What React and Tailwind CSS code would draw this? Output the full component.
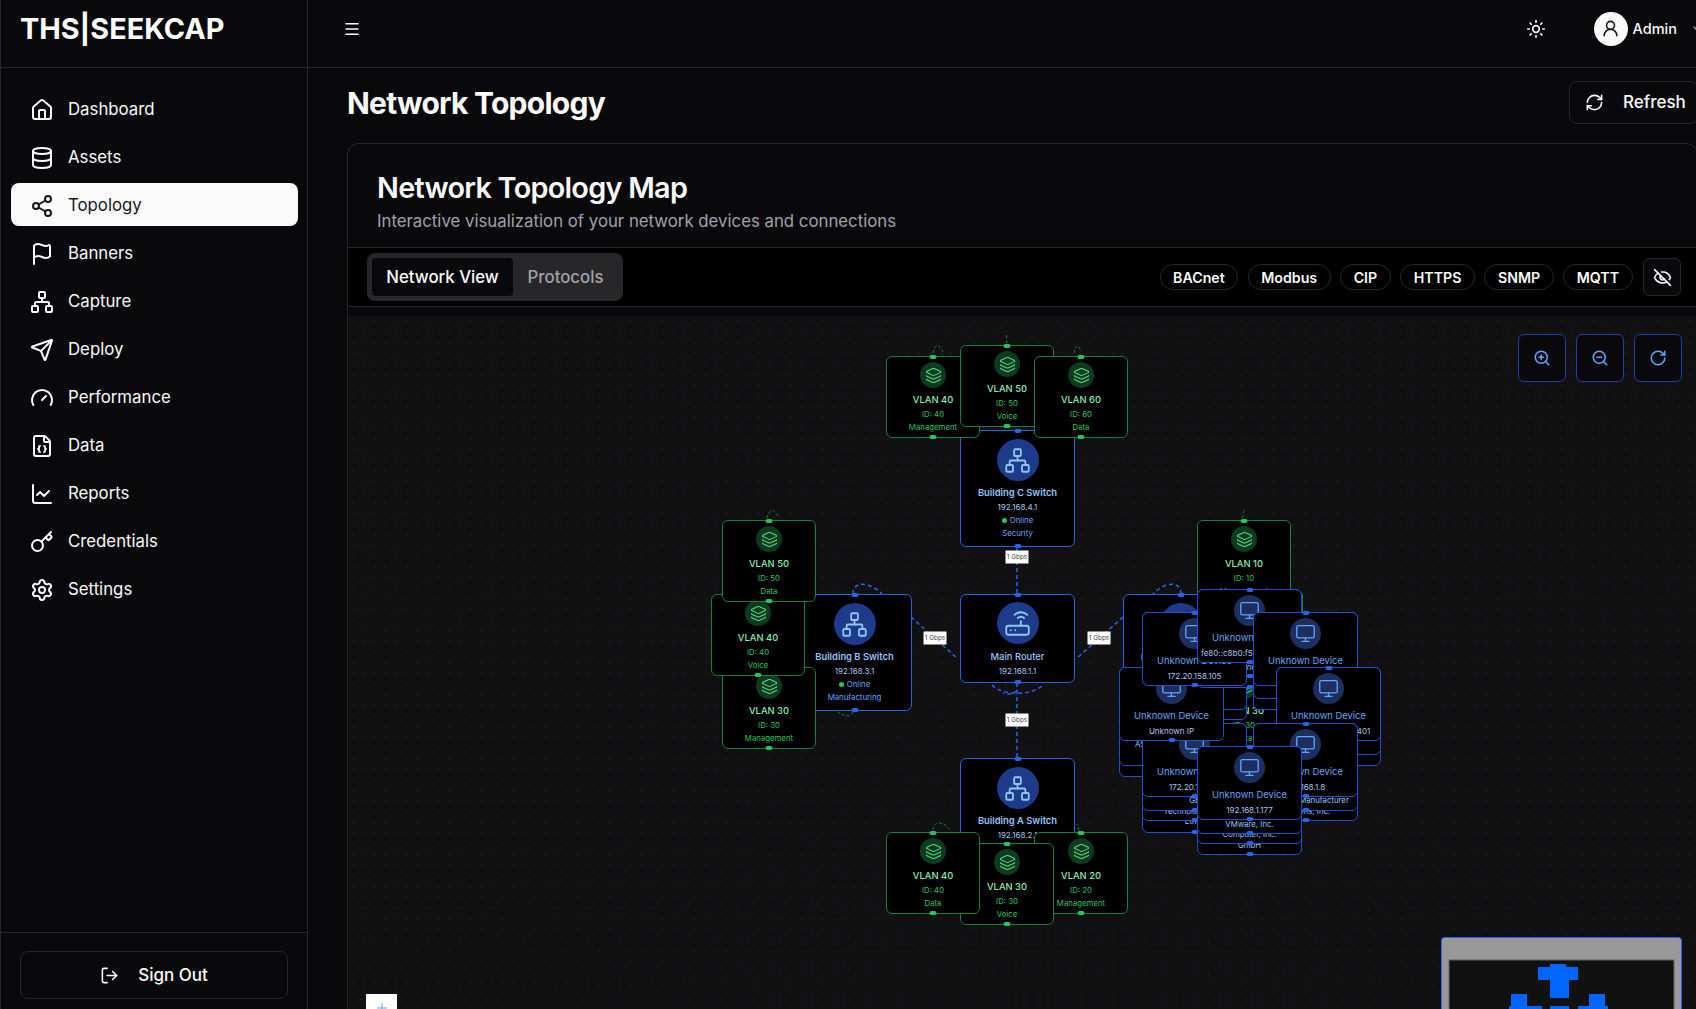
import React from 'react';
import {
  House, Database, Share2, Flag, Network, Send, Gauge, FileJson, ChartLine, Key, Settings, LogOut,
  Menu, Sun, UserRound, ChevronDown, RefreshCw, EyeOff, ZoomIn, ZoomOut, RotateCw, Layers, Router, Monitor, Plus,
} from 'lucide-react';

const OX = 348;
const OY = 316;

const navItems = [
  { label: 'Dashboard', icon: House },
  { label: 'Assets', icon: Database },
  { label: 'Topology', icon: Share2, active: true },
  { label: 'Banners', icon: Flag },
  { label: 'Capture', icon: Network },
  { label: 'Deploy', icon: Send },
  { label: 'Performance', icon: Gauge },
  { label: 'Data', icon: FileJson },
  { label: 'Reports', icon: ChartLine },
  { label: 'Credentials', icon: Key },
  { label: 'Settings', icon: Settings },
];

const protocols = ['BACnet', 'Modbus', 'CIP', 'HTTPS', 'SNMP', 'MQTT'];

// nodes are listed bottom to top, coordinates are page pixels
const nodes = [
  { kind: 'switch', x: 960, y: 430, title: 'Building C Switch', ip: '192.168.4.1', sub: 'Security' },
  { kind: 'vlan', x: 886, y: 356, title: 'VLAN 40', id: 40, sub: 'Management' },
  { kind: 'vlan', x: 960, y: 345, title: 'VLAN 50', id: 50, sub: 'Voice' },
  { kind: 'vlan', x: 1034, y: 356, title: 'VLAN 60', id: 60, sub: 'Data' },

  { kind: 'switch', x: 797, y: 594, title: 'Building B Switch', ip: '192.168.3.1', sub: 'Manufacturing' },
  { kind: 'vlan', x: 722, y: 667, title: 'VLAN 30', id: 30, sub: 'Management' },
  { kind: 'vlan', x: 711, y: 594, title: 'VLAN 40', id: 40, sub: 'Voice' },
  { kind: 'vlan', x: 722, y: 520, title: 'VLAN 50', id: 50, sub: 'Data' },

  { kind: 'router', x: 960, y: 594, title: 'Main Router', ip: '192.168.1.1' },

  { kind: 'switch', x: 960, y: 758, title: 'Building A Switch', ip: '192.168.2.1', sub: 'Office' },
  { kind: 'vlan', x: 1034, y: 832, title: 'VLAN 20', id: 20, sub: 'Management' },
  { kind: 'vlan', x: 960, y: 843, title: 'VLAN 30', id: 30, sub: 'Voice' },
  { kind: 'vlan', x: 886, y: 832, title: 'VLAN 40', id: 40, sub: 'Data' },

  { kind: 'switch', x: 1123, y: 594, title: 'Building D Switch', ip: '192.168.5.1', sub: 'Storage' },
  { kind: 'vlan', x: 1209, y: 590, title: 'VLAN 70', id: 70, sub: 'Guest' },
  { kind: 'vlan', x: 1197, y: 520, title: 'VLAN 10', id: 10, sub: 'Management' },
  { kind: 'vlan', x: 1197, y: 667, title: 'VLAN 30', id: 30, sub: 'Data' },

  { kind: 'stack', x: 1119, y: 667, stubs: [{ b: 765, t: 'ASUSTek Computer', ty: 744 }, { b: 776 }] },
  {
    kind: 'device', x: 1142, y: 723, ip: '172.20.158.62',
    stubs: [
      { b: 810, t: 'GE', ty: 800 },
      { b: 820, t: 'Technologies Co', ty: 811 },
      { b: 832, t: 'Ether', ty: 821 },
    ],
  },
  { kind: 'stack', x: 1142, y: 612, stubs: [{ b: 709 }, { b: 719 }] },
  { kind: 'device', x: 1119, y: 667, ip: 'Unknown IP' },
  { kind: 'stack', x: 1197, y: 589, stubs: [{ b: 676, t: 'Unknown', ty: 667 }, { b: 687 }] },
  { kind: 'device', x: 1142, y: 612, ip: '172.20.158.105' },
  { kind: 'device', x: 1197, y: 589, ip: 'fe80::c8b0:f57d:a3e1:9d2' },
  {
    kind: 'device', x: 1253, y: 612, ip: '192.168.1.20',
    stubs: [{ b: 698, t: 'Cisco Systems', ty: 689 }, { b: 709 }],
  },
  { kind: 'device', x: 1276, y: 667, ip: 'fe80::9c1d:47a:c1:f401', stubs: [{ b: 754 }, { b: 765 }] },
  {
    kind: 'device', x: 1253, y: 723, ip: '192.168.1.8',
    stubs: [
      { b: 810, t: 'Unknown Manufacturer', ty: 800 },
      { b: 820, t: 'Siemens, Inc.', ty: 811 },
    ],
  },
  {
    kind: 'device', x: 1197, y: 746, ip: '192.168.1.177',
    stubs: [
      { b: 833, t: 'VMware, Inc.', ty: 824 },
      { b: 843, t: 'Computer, Inc.', ty: 834 },
      { b: 854, t: 'GmbH', ty: 845 },
    ],
  },
];

const speedLabels = [
  { x: 1017, y: 557 },
  { x: 935, y: 638 },
  { x: 1099, y: 638 },
  { x: 1017, y: 720 },
];

const blueEdges = [
  'M1017 547 L1017 594',
  'M1017 683 L1017 758',
  'M911 617 L958 659',
  'M1123 617 L1076 659',
  'M853 594 C853 580 870 582 882 594',
  'M1181 594 C1181 580 1164 582 1153 594',
  'M992 685 C1002 696 1032 696 1043 685',
  'M1017 690 C1015 694 1008 695 1003 693',
];

const greenEdges = [
  'M933 353 C935 345 938 342 943 352',
  'M1007 343 L1006 333',
  'M1074 353 C1075 346 1078 342 1081 352',
  'M767 518 C769 510 772 507 778 516',
  'M1242 518 C1244 512 1245 508 1244 508',
  'M853 712 C851 718 844 716 838 712',
  'M933 830 C934 820 944 821 951 831',
  'M1079 830 L1077 824',
];

function Pin({ green, style }) {
  return (
    <span
      className={`absolute left-1/2 h-[4px] w-[7px] -translate-x-1/2 rounded-full ${green ? 'bg-[#22c55e]' : 'bg-[#2563eb]'}`}
      style={style}
    />
  );
}

function VlanNode({ node }) {
  return (
    <div
      className="absolute flex h-[82px] w-[94px] flex-col items-center rounded-md border border-[#15803d] bg-black pt-[5px]"
      style={{ left: node.x - OX, top: node.y - OY }}
    >
      <Pin green style={{ top: -2 }} />
      <div className="flex h-[26px] w-[26px] items-center justify-center rounded-full bg-[#0f3a1f]">
        <Layers size={17} strokeWidth={1.5} className="text-[#4ade80]" />
      </div>
      <div className="mt-[5px] h-[14px] text-[9.4px] leading-[14px] font-medium whitespace-nowrap text-[#86efac]">{node.title}</div>
      <div className="mt-[1.5px] h-[11px] text-[7.8px] leading-[11px] whitespace-nowrap text-[#22c55e]">ID: {node.id}</div>
      <div className="mt-[2px] h-[11px] text-[7.8px] leading-[11px] whitespace-nowrap text-[#22c55e]">{node.sub}</div>
      <Pin green style={{ bottom: -2 }} />
    </div>
  );
}

function SwitchNode({ node }) {
  return (
    <div
      className="absolute flex h-[117px] w-[115px] flex-col items-center rounded-md border border-[#2563eb] bg-black pt-[8px]"
      style={{ left: node.x - OX, top: node.y - OY }}
    >
      <Pin style={{ top: -2 }} />
      <div className="flex h-[42px] w-[42px] items-center justify-center rounded-full bg-[#1e3a8a]">
        <Network size={27} strokeWidth={1.6} className="text-[#93c5fd]" />
      </div>
      <div className="mt-[5px] h-[14px] text-[9.4px] leading-[14px] font-semibold whitespace-nowrap text-[#93c5fd]">{node.title}</div>
      <div className="mt-[1.5px] h-[11px] text-[8px] leading-[11px] whitespace-nowrap text-[#a9c4ec]">{node.ip}</div>
      <div className="mt-[2px] flex h-[11px] items-center gap-[3px] text-[7.8px] leading-[11px] whitespace-nowrap text-[#60a5fa]">
        <span className="h-[5px] w-[5px] rounded-full bg-[#22c55e]" />
        Online
      </div>
      <div className="mt-[2px] h-[11px] text-[7.8px] leading-[11px] whitespace-nowrap text-[#60a5fa]">{node.sub}</div>
      <Pin style={{ bottom: -2 }} />
    </div>
  );
}

function RouterNode({ node }) {
  return (
    <div
      className="absolute flex h-[89px] w-[115px] flex-col items-center rounded-md border border-[#2563eb] bg-black pt-[7px]"
      style={{ left: node.x - OX, top: node.y - OY }}
    >
      <Pin style={{ top: -2 }} />
      <div className="flex h-[42px] w-[42px] items-center justify-center rounded-full bg-[#1e3a8a]">
        <Router size={27} strokeWidth={1.6} className="text-[#93c5fd]" />
      </div>
      <div className="mt-[6px] h-[14px] text-[9.4px] leading-[14px] font-medium whitespace-nowrap text-[#93c5fd]">{node.title}</div>
      <div className="mt-[1.5px] h-[11px] text-[8px] leading-[11px] whitespace-nowrap text-[#a9c4ec]">{node.ip}</div>
      <Pin style={{ bottom: -2 }} />
    </div>
  );
}

// extra outlines that peek out under a device, longest first
function StubStack({ node }) {
  const stubs = [...(node.stubs || [])].reverse();
  return stubs.map(s => (
    <div
      key={s.b}
      className="absolute w-[105px] rounded-md border border-[#1d4ed8] bg-black"
      style={{ left: node.x - OX, top: node.y - OY, height: s.b - node.y + 1 }}
    >
      {s.t && (
        <div
          className="absolute inset-x-0 text-center text-[7.8px] leading-[11px] whitespace-nowrap text-[#93c5fd]"
          style={{ top: s.ty - node.y - 6 }}
        >
          {s.t}
        </div>
      )}
      <Pin style={{ bottom: -2 }} />
    </div>
  ));
}

function DeviceNode({ node }) {
  return (
    <>
      <StubStack node={node} />
      <div
        className="absolute flex h-[74px] w-[105px] flex-col items-center rounded-md border border-[#1d4ed8] bg-black pt-[5px]"
        style={{ left: node.x - OX, top: node.y - OY }}
      >
        <Pin style={{ top: -2 }} />
        <div className="flex h-[31px] w-[31px] shrink-0 items-center justify-center rounded-full bg-[#1e2f5f]">
          <Monitor size={21} strokeWidth={1.5} className="text-[#60a5fa]" />
        </div>
        <div className="mt-[5px] h-[14px] text-[9.4px] leading-[14px] whitespace-nowrap text-[#60a5fa]">Unknown Device</div>
        <div className="mt-[2.5px] h-[11px] text-[8px] leading-[11px] whitespace-nowrap text-[#a9c4ec]">{node.ip}</div>
        <Pin style={{ bottom: -2 }} />
      </div>
    </>
  );
}

function TopologyNode({ node }) {
  if (node.kind === 'vlan') return <VlanNode node={node} />;
  if (node.kind === 'switch') return <SwitchNode node={node} />;
  if (node.kind === 'router') return <RouterNode node={node} />;
  if (node.kind === 'stack') return <StubStack node={node} />;
  return <DeviceNode node={node} />;
}

function Sidebar() {
  return (
    <aside className="flex h-full w-[308px] shrink-0 flex-col border-x border-[#27272a] bg-[#09090b]">
      <div className="flex h-[68px] shrink-0 items-start border-b border-[#27272a] pt-[8px] pl-[19px] text-[28.8px] leading-[42px] font-bold text-white">
        THS|SEEKCAP
      </div>
      <nav className="flex flex-1 flex-col gap-[5px] pt-[19px] pr-[9px] pl-[10px]">
        {navItems.map(item => {
          const Icon = item.icon;
          return (
            <div
              key={item.label}
              className={`flex h-[43px] items-center gap-[14px] rounded-lg pt-[2px] pl-[19px] text-[16.8px] ${item.active ? 'bg-[#fafafa] text-[#18181b]' : 'text-[#fafafa]'}`}
            >
              <Icon size={24} strokeWidth={2} />
              {item.label}
            </div>
          );
        })}
      </nav>
      <div className="shrink-0 border-t border-[#27272a] px-[19px] pt-[18px] pb-[10px]">
        <div className="flex h-[48px] items-center justify-center gap-[19px] rounded-lg border border-[#27272a] pt-[1px] text-[17px] font-medium text-[#fafafa]">
          <LogOut size={19} strokeWidth={2} />
          Sign Out
        </div>
      </div>
    </aside>
  );
}

function Header() {
  return (
    <header className="flex h-[68px] shrink-0 items-center justify-between border-b border-[#27272a] pr-[32px] pb-[10px] pl-[35px]">
      <Menu size={18} className="text-[#fafafa]" />
      <div className="flex items-center">
        <Sun size={20} strokeWidth={2} className="mr-[48px] text-[#fafafa]" />
        <div className="flex h-[34px] w-[34px] items-center justify-center rounded-full bg-[#fafafa]">
          <UserRound size={19} strokeWidth={2} className="text-[#18181b]" />
        </div>
        <span className="ml-[5px] text-[14.5px] font-medium text-[#fafafa]">Admin</span>
        <ChevronDown size={16} className="ml-[13px] text-[#a1a1aa]" />
      </div>
    </header>
  );
}

function Toolbar() {
  return (
    <div className="flex h-[59px] items-center justify-between border-b border-[#27272a] bg-black pr-[16px] pl-[19px]">
      <div className="flex h-[48px] w-[256px] items-center rounded-lg bg-[#27272a] p-[5px]">
        <div className="flex h-[38px] w-[141px] items-center justify-center rounded bg-[#09090b] pt-[2px] text-[16.8px] font-medium text-[#fafafa]">
          Network View
        </div>
        <div className="flex-1 pt-[2px] text-center text-[16.8px] font-medium text-[#a1a1aa]">Protocols</div>
      </div>
      <div className="flex items-center gap-[9.5px]">
        {protocols.map(p => (
          <span key={p} className="flex h-[26px] items-center rounded-full border border-[#27272a] px-[12.5px] pt-[2px] text-[14.2px] font-semibold text-[#fafafa]">
            {p}
          </span>
        ))}
        <div className="ml-[1px] flex h-[38px] w-[38px] items-center justify-center rounded-md border border-[#27272a] bg-[#09090b] text-[#fafafa]">
          <EyeOff size={19} strokeWidth={2} />
        </div>
      </div>
    </div>
  );
}

function Canvas() {
  return (
    <div className="relative mt-[9px] h-[760px] bg-[#111111] bg-[radial-gradient(circle,#172c5c_0.6px,transparent_0.8px)] bg-[size:10.7px_10.7px]">
      <svg className="absolute inset-0" width="1349" height="760" viewBox={`${OX} ${OY} 1349 760`} fill="none">
        {blueEdges.map(d => (
          <path key={d} d={d} stroke="#2563eb" strokeWidth="1.5" strokeDasharray="4 3" />
        ))}
        {greenEdges.map(d => (
          <path key={d} d={d} stroke="#15803d" strokeWidth="1" strokeDasharray="3 2" />
        ))}
      </svg>

      {nodes.map((node, i) => (
        <TopologyNode key={i} node={node} />
      ))}

      {speedLabels.map(l => (
        <div
          key={l.x + '-' + l.y}
          className="absolute flex h-[13px] w-[23px] -translate-x-1/2 -translate-y-1/2 items-center justify-center bg-white text-[6.4px] whitespace-nowrap text-[#444]"
          style={{ left: l.x - OX, top: l.y - OY }}
        >
          1 Gbps
        </div>
      ))}

      <div className="absolute top-[18px] right-[15px] flex gap-[10px]">
        {[ZoomIn, ZoomOut, RotateCw].map((Icon, i) => (
          <div key={i} className="flex h-[48px] w-[48px] items-center justify-center rounded-md border border-[#1e40af] bg-[#09090b] text-[#60a5fa]">
            <Icon size={18} />
          </div>
        ))}
      </div>

      <div className="absolute top-[678px] left-[18px] flex h-[28px] w-[31px] items-center justify-center bg-white text-[#60a5fa]">
        <Plus size={16} strokeWidth={1.5} />
      </div>

      <svg className="absolute top-[621px] left-[1093px]" width="241" height="72" viewBox="1441 937 241 72">
        <rect x="1441.5" y="937.5" width="240" height="80" rx="3" fill="#999999" stroke="#2563eb" />
        <rect x="1449" y="960" width="225" height="60" fill="#111111" stroke="#666666" />
        <g fill="#0066ff">
          <rect x="1550" y="964" width="16" height="4" />
          <rect x="1538" y="967" width="40" height="13" />
          <rect x="1550" y="979" width="19" height="19" />
          <rect x="1511" y="994" width="16" height="13" />
          <rect x="1509" y="1006" width="33" height="4" />
          <rect x="1550" y="1006" width="19" height="4" />
          <rect x="1589" y="994" width="16" height="13" />
          <rect x="1578" y="1006" width="30" height="4" />
        </g>
      </svg>
    </div>
  );
}

export default function App() {
  return (
    <div className="flex h-[1009px] w-[1696px] overflow-hidden bg-[#09090b] font-[Inter,sans-serif] text-[#fafafa]">
      <Sidebar />
      <main className="flex h-full w-[1430px] shrink-0 flex-col">
        <Header />
        <div className="pr-[40px] pl-[39px]">
          <div className="flex h-[75px] items-start justify-between pt-[13px]">
            <h1 className="text-[30px] leading-[44px] font-bold tracking-tight text-[#fafafa]">Network Topology</h1>
            <div className="flex h-[43px] w-[129px] items-center gap-[19px] rounded-lg border border-[#27272a] pl-[15px] text-[17px] font-medium">
              <RefreshCw size={19} strokeWidth={2} />
              Refresh
            </div>
          </div>
          <div className="overflow-hidden rounded-t-xl border border-b-0 border-[#27272a]">
            <div className="h-[104px] border-b border-[#27272a] pt-[24px] pl-[29px]">
              <h2 className="text-[28.8px] leading-[40px] font-semibold tracking-tight text-[#fafafa]">Network Topology Map</h2>
              <p className="text-[16.8px] leading-[26px] text-[#a1a1aa]">Interactive visualization of your network devices and connections</p>
            </div>
            <Toolbar />
            <div className="bg-black">
              <Canvas />
            </div>
          </div>
        </div>
      </main>
    </div>
  );
}
